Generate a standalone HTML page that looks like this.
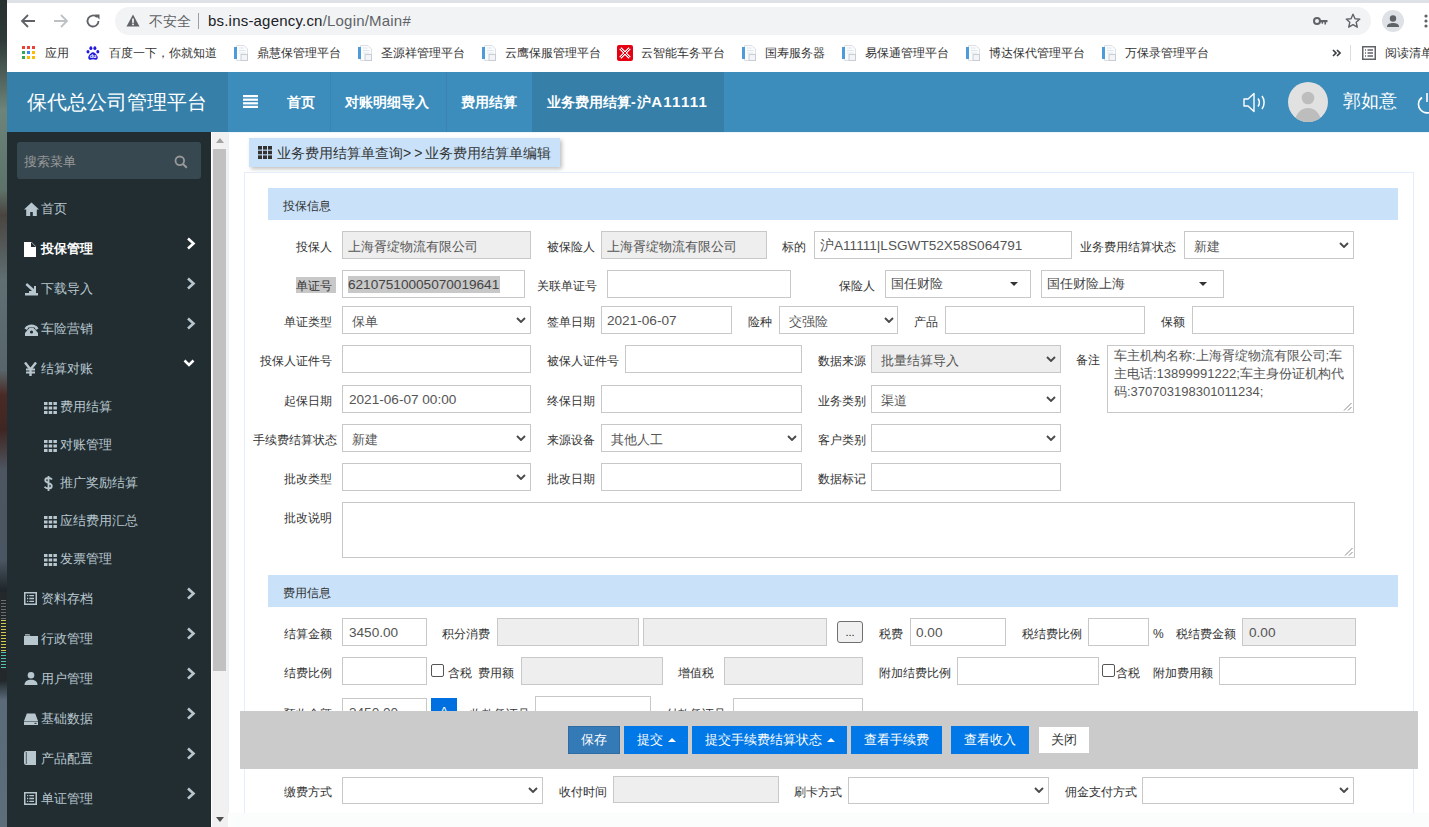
<!DOCTYPE html><html><head><meta charset="utf-8"><title>保代总公司管理平台</title><style>
*{box-sizing:content-box}
html,body{margin:0;padding:0}
body{width:1429px;height:827px;overflow:hidden;position:relative;background:#fff;font-family:"Liberation Sans",sans-serif;color:#333}
.abs{position:absolute}
.lb{position:absolute;font-size:12px;line-height:20px;height:20px;white-space:nowrap;color:#333;margin-top:2px}
.in{position:absolute;border:1px solid #c8c8c8;background:#fff;font-size:13px;color:#555;white-space:nowrap;overflow:hidden;box-sizing:border-box;padding-top:2px}
.dis{background:#eee}
.lt{font-size:13.6px;position:relative;top:-1px}
.cw{position:absolute;line-height:0}
.chev,.tri{display:block}
.sb{position:absolute;left:17px;font-size:13px;color:#b8c7ce;height:20px;line-height:20px;white-space:nowrap;margin-top:1px}
.sb .ic{position:absolute;left:0;top:3px}
.sb .tx{position:absolute;left:24px;top:0}
.sb .ar{position:absolute;left:179px;top:-6px}
.bm{position:absolute;top:44px;font-size:12px;color:#333;line-height:18px;white-space:nowrap}
.nav{position:absolute;top:0;height:60px;line-height:60px;color:#fff;font-size:14px;font-weight:bold;white-space:nowrap}
.btn{position:absolute;top:726px;height:28px;line-height:28px;font-size:13px;color:#fff;background:#0078e7;text-align:center;white-space:nowrap}
</style></head><body>
<div class="abs" style="left:0;top:0;width:7px;height:827px;background:linear-gradient(#26302e 0px,#2f3b38 40px,#6d847a 110px,#5d7268 190px,#4a4440 215px,#5f6f72 280px,#58666c 370px,#4a2a24 395px,#3f2622 430px,#4d5660 470px,#4a5662 560px,#20262a 590px,#20262a 680px,#5a6a78 700px,#5d6d7a 827px)"></div>
<div class="abs" style="left:0;top:592px;width:7px;height:88px;background:#23282b"></div>
<div class="abs" style="left:1px;top:600px;width:5px;height:70px;background:repeating-linear-gradient(#6a6e70 0 1px,#23282b 1px 3px)"></div>
<div class="abs" style="left:1px;top:620px;width:5px;height:32px;background:repeating-linear-gradient(#d0c850 0 1px,#23282b 1px 3px)"></div>
<div class="abs" style="left:1px;top:652px;width:5px;height:18px;background:repeating-linear-gradient(#50c0b0 0 1px,#23282b 1px 3px)"></div>
<div class="abs" style="left:7px;top:0;width:1422px;height:72px;background:#fff"></div>
<div class="abs" style="left:7px;top:0;width:1422px;height:3px;background:#dee1e6"></div>
<svg class="abs" style="left:20px;top:13px" width="16" height="16" viewBox="0 0 16 16"><path d="M15 8H3M8 2L2 8l6 6" fill="none" stroke="#5f6368" stroke-width="1.8"/></svg>
<svg class="abs" style="left:53px;top:13px" width="16" height="16" viewBox="0 0 16 16"><path d="M1 8h12M8 2l6 6-6 6" fill="none" stroke="#bdc1c6" stroke-width="1.8"/></svg>
<svg class="abs" style="left:85px;top:13px" width="16" height="16" viewBox="0 0 16 16"><path d="M13.5 8A5.5 5.5 0 1 1 11.9 4.1" fill="none" stroke="#5f6368" stroke-width="1.8"/><path d="M9.5 1.5h5v5z" fill="#5f6368"/></svg>
<div class="abs" style="left:115px;top:7px;width:1256px;height:28px;border-radius:14px;background:#f1f3f4"></div>
<svg class="abs" style="left:126px;top:14px" width="14" height="13" viewBox="0 0 14 13"><path d="M7 0.5L13.5 12.5H0.5z" fill="#5f6368"/><rect x="6.2" y="4.5" width="1.6" height="4.3" fill="#fff"/><rect x="6.2" y="9.6" width="1.6" height="1.6" fill="#fff"/></svg>
<div class="abs" style="left:149px;top:11px;font-size:14px;line-height:20px;color:#5f6368;white-space:nowrap">不安全</div>
<div class="abs" style="left:198px;top:13px;width:1px;height:16px;background:#9aa0a6"></div>
<div class="abs" style="left:208px;top:11px;font-size:15px;line-height:20px;color:#202124;white-space:nowrap;letter-spacing:0.2px">bs.ins-agency.cn<span style="color:#5f6368">/Login/Main#</span></div>
<svg class="abs" style="left:1313px;top:16px" width="15" height="10" viewBox="0 0 15 10"><circle cx="4" cy="5" r="3" fill="none" stroke="#5f6368" stroke-width="2"/><path d="M7 4h7.5v2.2H13v2.3h-1.6V6.2H10v1.6H8.6V6.2H7z" fill="#5f6368"/></svg>
<svg class="abs" style="left:1345px;top:13px" width="16" height="15" viewBox="0 0 16 15"><path d="M8 1.2l2 4.5 4.8.4-3.6 3.2 1.1 4.8L8 11.6l-4.3 2.5 1.1-4.8L1.2 6.1 6 5.7z" fill="none" stroke="#5f6368" stroke-width="1.4" stroke-linejoin="round"/></svg>
<div class="abs" style="left:1382px;top:10px;width:22px;height:22px;border-radius:50%;background:#dee1e6;overflow:hidden"><svg width="22" height="22" viewBox="0 0 22 22"><circle cx="11" cy="8.5" r="3.2" fill="#5f6368"/><path d="M5 16.5c0-2.5 3-3.6 6-3.6s6 1.1 6 3.6v.5H5z" fill="#5f6368"/></svg></div>
<svg class="abs" style="left:1423px;top:13px" width="6" height="16" viewBox="0 0 6 16"><circle cx="3" cy="3" r="1.6" fill="#5f6368"/><circle cx="3" cy="8" r="1.6" fill="#5f6368"/><circle cx="3" cy="13" r="1.6" fill="#5f6368"/></svg>
<svg class="abs" style="left:22px;top:46px" width="13" height="13" viewBox="0 0 13 13"><rect x="0" y="0" width="3" height="3" fill="#ea4335"/><rect x="5" y="0" width="3" height="3" fill="#ea4335"/><rect x="10" y="0" width="3" height="3" fill="#ea4335"/><rect x="0" y="5" width="3" height="3" fill="#34a853"/><rect x="5" y="5" width="3" height="3" fill="#4285f4"/><rect x="10" y="5" width="3" height="3" fill="#fbbc05"/><rect x="0" y="10" width="3" height="3" fill="#34a853"/><rect x="5" y="10" width="3" height="3" fill="#fbbc05"/><rect x="10" y="10" width="3" height="3" fill="#fbbc05"/></svg>
<div class="bm" style="left:45px">应用</div>
<svg class="abs" style="left:86px;top:46px" width="14" height="14" viewBox="0 0 14 14"><ellipse cx="2" cy="5.7" rx="1.5" ry="1.8" fill="#2319dc"/><ellipse cx="4.9" cy="2.2" rx="1.5" ry="1.9" fill="#2319dc"/><ellipse cx="8.9" cy="2.2" rx="1.5" ry="1.9" fill="#2319dc"/><ellipse cx="11.8" cy="5.7" rx="1.5" ry="1.8" fill="#2319dc"/><path d="M7 6.3c-1.6 0-3.2 2-4.3 3.6-.9 1.4-.5 3.8 1.8 3.8 1 0 1.6-.4 2.5-.4s1.5.4 2.5.4c2.3 0 2.7-2.4 1.8-3.8C10.2 8.3 8.6 6.3 7 6.3z" fill="#2319dc"/><text x="7" y="12" font-size="5.5" font-weight="bold" fill="#fff" text-anchor="middle" font-family="Liberation Sans">du</text></svg>
<div class="bm" style="left:109px">百度一下，你就知道</div>
<svg class="abs" style="left:233px;top:45px" width="16" height="16" viewBox="0 0 16 16"><path d="M3.5 0.5h7.5l3.5 3.5v11.5h-11z" fill="#fbfcfd" stroke="#dcdfe4"/><rect x="1" y="2" width="3" height="12" fill="#4d9bd8"/><path d="M6 3h4.5M6 5.5h6.5M6 8h6.5" stroke="#dfe4ea"/><rect x="8" y="9.5" width="6.5" height="6" fill="#f2f4f7" stroke="#c9cdd3"/></svg>
<div class="bm" style="left:257px">鼎慧保管理平台</div>
<svg class="abs" style="left:357px;top:45px" width="16" height="16" viewBox="0 0 16 16"><path d="M3.5 0.5h7.5l3.5 3.5v11.5h-11z" fill="#fbfcfd" stroke="#dcdfe4"/><rect x="1" y="2" width="3" height="12" fill="#4d9bd8"/><path d="M6 3h4.5M6 5.5h6.5M6 8h6.5" stroke="#dfe4ea"/><rect x="8" y="9.5" width="6.5" height="6" fill="#f2f4f7" stroke="#c9cdd3"/></svg>
<div class="bm" style="left:381px">圣源祥管理平台</div>
<svg class="abs" style="left:481px;top:45px" width="16" height="16" viewBox="0 0 16 16"><path d="M3.5 0.5h7.5l3.5 3.5v11.5h-11z" fill="#fbfcfd" stroke="#dcdfe4"/><rect x="1" y="2" width="3" height="12" fill="#4d9bd8"/><path d="M6 3h4.5M6 5.5h6.5M6 8h6.5" stroke="#dfe4ea"/><rect x="8" y="9.5" width="6.5" height="6" fill="#f2f4f7" stroke="#c9cdd3"/></svg>
<div class="bm" style="left:505px">云鹰保服管理平台</div>
<svg class="abs" style="left:741px;top:45px" width="16" height="16" viewBox="0 0 16 16"><path d="M3.5 0.5h7.5l3.5 3.5v11.5h-11z" fill="#fbfcfd" stroke="#dcdfe4"/><rect x="1" y="2" width="3" height="12" fill="#4d9bd8"/><path d="M6 3h4.5M6 5.5h6.5M6 8h6.5" stroke="#dfe4ea"/><rect x="8" y="9.5" width="6.5" height="6" fill="#f2f4f7" stroke="#c9cdd3"/></svg>
<div class="bm" style="left:765px">国寿服务器</div>
<svg class="abs" style="left:841px;top:45px" width="16" height="16" viewBox="0 0 16 16"><path d="M3.5 0.5h7.5l3.5 3.5v11.5h-11z" fill="#fbfcfd" stroke="#dcdfe4"/><rect x="1" y="2" width="3" height="12" fill="#4d9bd8"/><path d="M6 3h4.5M6 5.5h6.5M6 8h6.5" stroke="#dfe4ea"/><rect x="8" y="9.5" width="6.5" height="6" fill="#f2f4f7" stroke="#c9cdd3"/></svg>
<div class="bm" style="left:865px">易保通管理平台</div>
<svg class="abs" style="left:965px;top:45px" width="16" height="16" viewBox="0 0 16 16"><path d="M3.5 0.5h7.5l3.5 3.5v11.5h-11z" fill="#fbfcfd" stroke="#dcdfe4"/><rect x="1" y="2" width="3" height="12" fill="#4d9bd8"/><path d="M6 3h4.5M6 5.5h6.5M6 8h6.5" stroke="#dfe4ea"/><rect x="8" y="9.5" width="6.5" height="6" fill="#f2f4f7" stroke="#c9cdd3"/></svg>
<div class="bm" style="left:989px">博达保代管理平台</div>
<svg class="abs" style="left:1101px;top:45px" width="16" height="16" viewBox="0 0 16 16"><path d="M3.5 0.5h7.5l3.5 3.5v11.5h-11z" fill="#fbfcfd" stroke="#dcdfe4"/><rect x="1" y="2" width="3" height="12" fill="#4d9bd8"/><path d="M6 3h4.5M6 5.5h6.5M6 8h6.5" stroke="#dfe4ea"/><rect x="8" y="9.5" width="6.5" height="6" fill="#f2f4f7" stroke="#c9cdd3"/></svg>
<div class="bm" style="left:1125px">万保录管理平台</div>
<svg class="abs" style="left:617px;top:45px" width="16" height="16" viewBox="0 0 16 16"><rect width="16" height="16" rx="2" fill="#e50012"/><path d="M3.3 3.3l9.4 9.4M12.7 3.3l-9.4 9.4" stroke="#fff" stroke-width="3"/><path d="M3.3 3.3l9.4 9.4M12.7 3.3l-9.4 9.4" stroke="#e50012" stroke-width="1"/><circle cx="8" cy="8" r="1" fill="#e50012"/></svg>
<div class="bm" style="left:641px">云智能车务平台</div>
<svg class="abs" style="left:1332px;top:49px" width="9" height="8" viewBox="0 0 9 8"><path d="M1 1l3 3-3 3M5 1l3 3-3 3" fill="none" stroke="#3c4043" stroke-width="1.7"/></svg>
<div class="abs" style="left:1350px;top:45px;width:1px;height:16px;background:#dadce0"></div>
<svg class="abs" style="left:1362px;top:46px" width="14" height="14" viewBox="0 0 14 14"><rect x="0.75" y="0.75" width="12.5" height="12.5" fill="none" stroke="#5f6368" stroke-width="1.5"/><path d="M3 4h1M5.5 4h5.5M3 7h1M5.5 7h5.5M3 10h1M5.5 10h5.5" stroke="#5f6368" stroke-width="1.3"/></svg>
<div class="bm" style="left:1385px">阅读清单</div>
<div class="abs" style="left:7px;top:72px;width:1422px;height:60px;background:#3c8dbc"></div>
<div class="abs" style="left:7px;top:72px;width:221px;height:60px;background:#367fa9"></div>
<div class="abs" style="left:27px;top:88px;font-size:20px;line-height:28px;color:#fff;white-space:nowrap">保代总公司管理平台</div>
<svg class="abs" style="left:243px;top:95px" width="15" height="13" viewBox="0 0 15 13"><rect y="0" width="15" height="2.2" fill="#fff"/><rect y="3.6" width="15" height="2.2" fill="#fff"/><rect y="7.2" width="15" height="2.2" fill="#fff"/><rect y="10.8" width="15" height="2.2" fill="#fff"/></svg>
<div class="abs" style="left:330px;top:72px;width:1px;height:60px;background:#3a84b0"></div>
<div class="abs" style="left:446px;top:72px;width:1px;height:60px;background:#3a84b0"></div>
<div class="abs" style="left:532px;top:72px;width:192px;height:60px;background:#367fa9"></div>
<div class="abs" style="left:0;top:72px;width:1429px;height:60px"><div class="nav" style="left:287px">首页</div><div class="nav" style="left:345px">对账明细导入</div><div class="nav" style="left:461px">费用结算</div><div class="nav" style="left:547px">业务费用结算<span style="letter-spacing:1.5px">-</span>沪<span style="font-size:15px;letter-spacing:1.3px">A11111</span></div></div>
<svg class="abs" style="left:1243px;top:92px" width="24" height="21" viewBox="0 0 24 21"><path d="M1 7h4l6-5.5v18L5 14H1z" fill="none" stroke="#fff" stroke-width="1.4" stroke-linejoin="round"/><path d="M15 6.5c1.6 2.3 1.6 5.7 0 8M19 4c2.8 3.6 2.8 9.4 0 13" fill="none" stroke="#fff" stroke-width="1.5"/></svg>
<div class="abs" style="left:1288px;top:82px;width:40px;height:40px;border-radius:50%;background:#e1e1e1;overflow:hidden"><svg width="40" height="40" viewBox="0 0 40 40"><circle cx="20" cy="16" r="6.3" fill="#bdbdbd"/><ellipse cx="20" cy="38.5" rx="12.5" ry="12.5" fill="#bdbdbd"/></svg></div>
<div class="abs" style="left:1343px;top:89px;font-size:18px;line-height:24px;color:#fff;white-space:nowrap">郭如意</div>
<svg class="abs" style="left:1416px;top:91px" width="22" height="24" viewBox="0 0 22 24"><path d="M6 6.5A8.5 8.5 0 1 0 16 6.5" fill="none" stroke="#fff" stroke-width="1.6"/><path d="M11 2v9" stroke="#fff" stroke-width="1.6"/></svg>
<div class="abs" style="left:7px;top:132px;width:204px;height:695px;background:#222d32"></div>
<div class="abs" style="left:17px;top:142px;width:184px;height:37px;border-radius:3px;background:#374850"></div>
<div class="abs" style="left:24px;top:152px;font-size:13px;line-height:20px;color:#999;white-space:nowrap">搜索菜单</div>
<svg class="abs" style="left:174px;top:155px" width="14" height="14" viewBox="0 0 14 14"><circle cx="5.8" cy="5.8" r="4.3" fill="none" stroke="#999" stroke-width="1.8"/><path d="M9 9l3.8 3.8" stroke="#999" stroke-width="2"/></svg>
<div class="sb" style="top:198px;left:17px;"><span class="ic" style="top:3px;left:7px"><svg width="15" height="14" viewBox="0 0 15 14"><path d="M7.5 0.5L0 7.5h2.2V14h4V10h2.6v4h4V7.5H15z" fill="#b8c7ce"/></svg></span><span class="tx">首页</span></div>
<div class="sb" style="top:238px;left:17px;color:#fff;font-weight:bold"><span class="ic" style="top:3px;left:7px"><svg width="12" height="15" viewBox="0 0 12 15"><path d="M0 0h7.5l4.5 4.5V15H0z" fill="#fff"/><path d="M7 0v5h5" fill="#222d32"/></svg></span><span class="tx">投保管理</span><span class="ar" style="left:169px;top:-3px"><svg width="11" height="13" viewBox="0 0 11 13"><path d="M2 1.5l5.5 5-5.5 5" fill="none" stroke="#fff" stroke-width="2.6"/></svg></span></div>
<div class="sb" style="top:278px;left:17px;"><span class="ic" style="top:3px;left:7px"><svg width="15" height="14" viewBox="0 0 15 14"><path d="M1 11h13v2.5H1z" fill="#b8c7ce"/><path d="M3 1l7 6V4h2v7H5V9h3L1.5 3z" fill="#b8c7ce"/></svg></span><span class="tx">下载导入</span><span class="ar" style="left:169px;top:-3px"><svg width="11" height="13" viewBox="0 0 11 13"><path d="M2 1.5l5.5 5-5.5 5" fill="none" stroke="#b8c7ce" stroke-width="2.6"/></svg></span></div>
<div class="sb" style="top:318px;left:17px;"><span class="ic" style="top:3px;left:7px"><svg width="15" height="12" viewBox="0 0 15 12"><path d="M0.5 4.5C2 1.5 5 0.5 7.5 0.5s5.5 1 7 4L12 6 10.5 3.5h-6L3 6z" fill="#b8c7ce"/><path d="M3.5 6l2-2h4l2 2 2.5 3v3H1V9z" fill="#b8c7ce"/><circle cx="7.5" cy="8" r="1.6" fill="#222d32"/></svg></span><span class="tx">车险营销</span><span class="ar" style="left:169px;top:-3px"><svg width="11" height="13" viewBox="0 0 11 13"><path d="M2 1.5l5.5 5-5.5 5" fill="none" stroke="#b8c7ce" stroke-width="2.6"/></svg></span></div>
<div class="sb" style="top:358px;left:17px;"><span class="ic" style="top:3px;left:7px"><svg width="13" height="14" viewBox="0 0 13 14"><path d="M1 0.5l5.5 7M12 0.5L6.5 7.5V14" fill="none" stroke="#b8c7ce" stroke-width="2.4"/><path d="M2 7.5h9M2 10.5h9" stroke="#b8c7ce" stroke-width="1.8"/></svg></span><span class="tx">结算对账</span><span class="ar" style="left:166px;top:-5px"><svg width="12" height="10" viewBox="0 0 12 10"><path d="M1.5 2.5l4.5 4.5 4.5-4.5" fill="none" stroke="#fff" stroke-width="2.6"/></svg></span></div>
<div class="sb" style="top:396px;left:37px"><span class="ic" style="top:3px;left:7px"><svg width="13" height="12" viewBox="0 0 13 12"><g fill="#b8c7ce"><rect x="0" y="0" width="3.5" height="3"/><rect x="4.7" y="0" width="3.5" height="3"/><rect x="9.4" y="0" width="3.5" height="3"/><rect x="0" y="4.5" width="3.5" height="3"/><rect x="4.7" y="4.5" width="3.5" height="3"/><rect x="9.4" y="4.5" width="3.5" height="3"/><rect x="0" y="9" width="3.5" height="3"/><rect x="4.7" y="9" width="3.5" height="3"/><rect x="9.4" y="9" width="3.5" height="3"/></g></svg></span><span class="tx" style="left:23px">费用结算</span></div>
<div class="sb" style="top:434px;left:37px"><span class="ic" style="top:3px;left:7px"><svg width="13" height="12" viewBox="0 0 13 12"><g fill="#b8c7ce"><rect x="0" y="0" width="3.5" height="3"/><rect x="4.7" y="0" width="3.5" height="3"/><rect x="9.4" y="0" width="3.5" height="3"/><rect x="0" y="4.5" width="3.5" height="3"/><rect x="4.7" y="4.5" width="3.5" height="3"/><rect x="9.4" y="4.5" width="3.5" height="3"/><rect x="0" y="9" width="3.5" height="3"/><rect x="4.7" y="9" width="3.5" height="3"/><rect x="9.4" y="9" width="3.5" height="3"/></g></svg></span><span class="tx" style="left:23px">对账管理</span></div>
<div class="sb" style="top:472px;left:37px"><span class="ic" style="top:3px;left:7px"><svg width="9" height="15" viewBox="0 0 9 15"><path d="M8 3.5C7.3 2.5 6 2 4.5 2 2.5 2 1.2 3 1.2 4.3c0 3 6.6 2.2 6.6 5.6 0 1.5-1.5 2.6-3.5 2.6-1.6 0-3-.6-3.8-1.7M4.5 0v15" fill="none" stroke="#b8c7ce" stroke-width="1.8"/></svg></span><span class="tx" style="left:23px">推广奖励结算</span></div>
<div class="sb" style="top:510px;left:37px"><span class="ic" style="top:3px;left:7px"><svg width="13" height="12" viewBox="0 0 13 12"><g fill="#b8c7ce"><rect x="0" y="0" width="3.5" height="3"/><rect x="4.7" y="0" width="3.5" height="3"/><rect x="9.4" y="0" width="3.5" height="3"/><rect x="0" y="4.5" width="3.5" height="3"/><rect x="4.7" y="4.5" width="3.5" height="3"/><rect x="9.4" y="4.5" width="3.5" height="3"/><rect x="0" y="9" width="3.5" height="3"/><rect x="4.7" y="9" width="3.5" height="3"/><rect x="9.4" y="9" width="3.5" height="3"/></g></svg></span><span class="tx" style="left:23px">应结费用汇总</span></div>
<div class="sb" style="top:548px;left:37px"><span class="ic" style="top:3px;left:7px"><svg width="13" height="12" viewBox="0 0 13 12"><g fill="#b8c7ce"><rect x="0" y="0" width="3.5" height="3"/><rect x="4.7" y="0" width="3.5" height="3"/><rect x="9.4" y="0" width="3.5" height="3"/><rect x="0" y="4.5" width="3.5" height="3"/><rect x="4.7" y="4.5" width="3.5" height="3"/><rect x="9.4" y="4.5" width="3.5" height="3"/><rect x="0" y="9" width="3.5" height="3"/><rect x="4.7" y="9" width="3.5" height="3"/><rect x="9.4" y="9" width="3.5" height="3"/></g></svg></span><span class="tx" style="left:23px">发票管理</span></div>
<div class="sb" style="top:588px;left:17px;"><span class="ic" style="top:2px;left:7px"><svg width="13" height="13" viewBox="0 0 13 13"><rect x="0.75" y="0.75" width="11.5" height="11.5" fill="none" stroke="#b8c7ce" stroke-width="1.5"/><path d="M3 3.7h1.2M5.3 3.7h4.7M3 6.5h1.2M5.3 6.5h4.7M3 9.3h1.2M5.3 9.3h4.7" stroke="#b8c7ce" stroke-width="1.3"/></svg></span><span class="tx">资料存档</span><span class="ar" style="left:169px;top:-3px"><svg width="11" height="13" viewBox="0 0 11 13"><path d="M2 1.5l5.5 5-5.5 5" fill="none" stroke="#b8c7ce" stroke-width="2.6"/></svg></span></div>
<div class="sb" style="top:628px;left:17px;"><span class="ic" style="top:2px;left:7px"><svg width="14" height="12" viewBox="0 0 14 12"><path d="M0 3h14v9H0z" fill="#b8c7ce"/><path d="M1 1.2h4.5l1 1.3H1z" fill="#b8c7ce"/></svg></span><span class="tx">行政管理</span><span class="ar" style="left:169px;top:-3px"><svg width="11" height="13" viewBox="0 0 11 13"><path d="M2 1.5l5.5 5-5.5 5" fill="none" stroke="#b8c7ce" stroke-width="2.6"/></svg></span></div>
<div class="sb" style="top:668px;left:17px;"><span class="ic" style="top:2px;left:7px"><svg width="14" height="14" viewBox="0 0 14 14"><circle cx="7" cy="4.2" r="3.3" fill="#b8c7ce"/><path d="M0.5 14c0-3.3 2.8-5.2 6.5-5.2s6.5 1.9 6.5 5.2z" fill="#b8c7ce"/></svg></span><span class="tx">用户管理</span><span class="ar" style="left:169px;top:-3px"><svg width="11" height="13" viewBox="0 0 11 13"><path d="M2 1.5l5.5 5-5.5 5" fill="none" stroke="#b8c7ce" stroke-width="2.6"/></svg></span></div>
<div class="sb" style="top:708px;left:17px;"><span class="ic" style="top:2px;left:7px"><svg width="14" height="12" viewBox="0 0 14 12"><path d="M2.8 0.5h8.4l2.8 7.5H0z" fill="#b8c7ce"/><rect x="0" y="8.5" width="14" height="3.5" fill="#b8c7ce"/><rect x="10.5" y="9.8" width="2" height="1" fill="#222d32"/></svg></span><span class="tx">基础数据</span><span class="ar" style="left:169px;top:-3px"><svg width="11" height="13" viewBox="0 0 11 13"><path d="M2 1.5l5.5 5-5.5 5" fill="none" stroke="#b8c7ce" stroke-width="2.6"/></svg></span></div>
<div class="sb" style="top:748px;left:17px;"><span class="ic" style="top:2px;left:7px"><svg width="12" height="14" viewBox="0 0 12 14"><path d="M2 0h10v14H2c-1 0-2-.8-2-2V2c0-1.2 1-2 2-2z" fill="#b8c7ce"/><path d="M2.3 1v12" stroke="#222d32" stroke-width="0.7"/></svg></span><span class="tx">产品配置</span><span class="ar" style="left:169px;top:-3px"><svg width="11" height="13" viewBox="0 0 11 13"><path d="M2 1.5l5.5 5-5.5 5" fill="none" stroke="#b8c7ce" stroke-width="2.6"/></svg></span></div>
<div class="sb" style="top:788px;left:17px;"><span class="ic" style="top:2px;left:7px"><svg width="13" height="13" viewBox="0 0 13 13"><rect x="0.75" y="0.75" width="11.5" height="11.5" fill="none" stroke="#b8c7ce" stroke-width="1.5"/><path d="M3 3.7h1.2M5.3 3.7h4.7M3 6.5h1.2M5.3 6.5h4.7M3 9.3h1.2M5.3 9.3h4.7" stroke="#b8c7ce" stroke-width="1.3"/></svg></span><span class="tx">单证管理</span><span class="ar" style="left:169px;top:-3px"><svg width="11" height="13" viewBox="0 0 11 13"><path d="M2 1.5l5.5 5-5.5 5" fill="none" stroke="#b8c7ce" stroke-width="2.6"/></svg></span></div>
<div class="abs" style="left:211px;top:132px;width:1px;height:695px;background:#fff"></div>
<div class="abs" style="left:212px;top:132px;width:16px;height:695px;background:#f1f1f1"></div>
<div class="abs" style="left:213px;top:149px;width:13px;height:522px;background:#c1c1c1"></div>
<svg class="abs" style="left:216px;top:138px" width="8" height="5" viewBox="0 0 8 5"><path d="M0 5h8L4 0z" fill="#a3a3a3"/></svg>
<svg class="abs" style="left:216px;top:817px" width="8" height="5" viewBox="0 0 8 5"><path d="M0 0h8L4 5z" fill="#505050"/></svg>
<div class="abs" style="left:228px;top:132px;width:1201px;height:695px;background:#fff"></div>
<div class="abs" style="left:228px;top:813px;width:1201px;height:14px;background:#fbfcfc"></div>
<div class="abs" style="left:228px;top:132px;width:1px;height:681px;background:#e8f1fb"></div>
<div class="abs" style="left:228px;top:132px;width:1201px;height:1px;background:#eef4fc"></div>
<div class="abs" style="left:249px;top:138px;width:311px;height:29px;background:#c9e2f9;box-shadow:2px 2px 4px rgba(0,0,0,0.25)"></div>
<svg class="abs" style="left:258px;top:146px" width="14" height="13" viewBox="0 0 14 13"><g fill="#333"><rect x="0" y="0" width="4" height="3.6"/><rect x="5" y="0" width="4" height="3.6"/><rect x="10" y="0" width="4" height="3.6"/><rect x="0" y="4.7" width="4" height="3.6"/><rect x="5" y="4.7" width="4" height="3.6"/><rect x="10" y="4.7" width="4" height="3.6"/><rect x="0" y="9.4" width="4" height="3.6"/><rect x="5" y="9.4" width="4" height="3.6"/><rect x="10" y="9.4" width="4" height="3.6"/></g></svg>
<div class="abs" style="left:277px;top:143px;font-size:14px;line-height:20px;color:#333;white-space:nowrap">业务费用结算单查询<span style="letter-spacing:3px">&gt;&gt;</span>业务费用结算单编辑</div>
<div class="abs" style="left:244px;top:172px;width:1168px;height:640px;border:1px solid #e3eefa;border-bottom:none"></div>
<div class="abs" style="left:268px;top:188px;width:1130px;height:32px;background:#c9e2f9"></div>
<div class="lb" style="left:283px;top:194px">投保信息</div>
<div class="abs" style="left:268px;top:575px;width:1130px;height:32px;background:#c9e2f9"></div>
<div class="lb" style="left:283px;top:581px">费用信息</div>
<div class="lb " style="left:296px;top:235px">投保人</div>
<div class="in dis" style="left:342px;top:231px;width:189px;height:28px;line-height:26px;padding-left:5px">上海胥绽物流有限公司</div>
<div class="lb " style="left:547px;top:235px">被保险人</div>
<div class="in dis" style="left:601px;top:231px;width:166px;height:28px;line-height:26px;padding-left:5px">上海胥绽物流有限公司</div>
<div class="lb " style="left:782px;top:235px">标的</div>
<div class="in" style="left:814px;top:231px;width:258px;height:28px;line-height:26px;padding-left:5px"><span class="lt">沪A11111|LSGWT52X58S064791</span></div>
<div class="lb " style="left:1080px;top:235px">业务费用结算状态</div>
<div class="in sel" style="left:1184px;top:231px;width:170px;height:28px;line-height:26px;padding-left:9px">新建<span class="cw" style="left:154px;top:10px"><svg class="chev" width="10" height="6" viewBox="0 0 10 6"><polyline points="1,1 5,5 9,1" fill="none" stroke="#4a4a4a" stroke-width="1.9"/></svg></span></div>
<div class="abs" style="left:296px;top:277px;width:40px;height:16px;background:#c8c8c8"></div>
<div class="lb " style="left:296px;top:274px">单证号</div>
<div class="in" style="left:342px;top:270px;width:183px;height:28px;line-height:26px;padding-left:5px"><span style="background:#c8c8c8;color:#444;display:inline-block;line-height:17px;padding-right:1px;font-size:13.6px;vertical-align:top;margin-top:3px">62107510005070019641</span></div>
<div class="lb " style="left:537px;top:274px">关联单证号</div>
<div class="in" style="left:607px;top:270px;width:184px;height:28px;line-height:26px;padding-left:5px"></div>
<div class="lb " style="left:839px;top:274px">保险人</div>
<div class="in" style="left:885px;top:270px;width:146px;height:28px;line-height:26px;padding-left:5px;padding-top:0;color:#444">国任财险<span class="cw" style="left:124px;top:11px"><svg class="tri" width="8" height="4" viewBox="0 0 8 4"><polygon points="0,0 8,0 4,4" fill="#333"/></svg></span></div>
<div class="in" style="left:1041px;top:270px;width:183px;height:28px;line-height:26px;padding-left:5px;padding-top:0;color:#444">国任财险上海<span class="cw" style="left:157px;top:11px"><svg class="tri" width="8" height="4" viewBox="0 0 8 4"><polygon points="0,0 8,0 4,4" fill="#333"/></svg></span></div>
<div class="lb " style="left:284px;top:310px">单证类型</div>
<div class="in sel" style="left:342px;top:306px;width:189px;height:28px;line-height:26px;padding-left:9px">保单<span class="cw" style="left:173px;top:10px"><svg class="chev" width="10" height="6" viewBox="0 0 10 6"><polyline points="1,1 5,5 9,1" fill="none" stroke="#4a4a4a" stroke-width="1.9"/></svg></span></div>
<div class="lb " style="left:547px;top:310px">签单日期</div>
<div class="in" style="left:601px;top:306px;width:131px;height:28px;line-height:26px;padding-left:5px"><span class="lt">2021-06-07</span></div>
<div class="lb " style="left:748px;top:310px">险种</div>
<div class="in sel" style="left:779px;top:306px;width:119px;height:28px;line-height:26px;padding-left:9px">交强险<span class="cw" style="left:104px;top:10px"><svg class="chev" width="10" height="6" viewBox="0 0 10 6"><polyline points="1,1 5,5 9,1" fill="none" stroke="#4a4a4a" stroke-width="1.9"/></svg></span></div>
<div class="lb " style="left:914px;top:310px">产品</div>
<div class="in" style="left:945px;top:306px;width:200px;height:28px;line-height:26px;padding-left:5px"></div>
<div class="lb " style="left:1161px;top:310px">保额</div>
<div class="in" style="left:1192px;top:306px;width:162px;height:28px;line-height:26px;padding-left:5px"></div>
<div class="lb " style="left:260px;top:349px">投保人证件号</div>
<div class="in" style="left:342px;top:345px;width:189px;height:28px;line-height:26px;padding-left:5px"></div>
<div class="lb " style="left:547px;top:349px">被保人证件号</div>
<div class="in" style="left:625px;top:345px;width:177px;height:28px;line-height:26px;padding-left:5px"></div>
<div class="lb " style="left:818px;top:349px">数据来源</div>
<div class="in sel dis" style="left:871px;top:345px;width:190px;height:28px;line-height:26px;padding-left:9px">批量结算导入<span class="cw" style="left:174px;top:10px"><svg class="chev" width="10" height="6" viewBox="0 0 10 6"><polyline points="1,1 5,5 9,1" fill="none" stroke="#4a4a4a" stroke-width="1.9"/></svg></span></div>
<div class="lb " style="left:1076px;top:348px">备注</div>
<div class="in" style="left:1107px;top:345px;width:247px;height:68px;padding:1px 0 0 6px;font-size:13px;line-height:18px;white-space:normal;color:#555">车主机构名称:上海胥绽物流有限公司;车主电话:13899991222;车主身份证机构代码:370703198301011234;<svg style="position:absolute;right:1px;bottom:1px" width="9" height="9" viewBox="0 0 9 9"><path d="M8.5 1L1 8.5M8.5 5L5 8.5" stroke="#888" stroke-width="1"/></svg></div>
<div class="lb " style="left:284px;top:389px">起保日期</div>
<div class="in" style="left:342px;top:385px;width:189px;height:28px;line-height:26px;padding-left:6px"><span class="lt">2021-06-07 00:00</span></div>
<div class="lb " style="left:547px;top:389px">终保日期</div>
<div class="in" style="left:601px;top:385px;width:201px;height:28px;line-height:26px;padding-left:5px"></div>
<div class="lb " style="left:818px;top:389px">业务类别</div>
<div class="in sel" style="left:871px;top:385px;width:190px;height:28px;line-height:26px;padding-left:9px">渠道<span class="cw" style="left:174px;top:10px"><svg class="chev" width="10" height="6" viewBox="0 0 10 6"><polyline points="1,1 5,5 9,1" fill="none" stroke="#4a4a4a" stroke-width="1.9"/></svg></span></div>
<div class="lb " style="left:253px;top:428px">手续费结算状态</div>
<div class="in sel" style="left:342px;top:424px;width:189px;height:28px;line-height:26px;padding-left:9px">新建<span class="cw" style="left:173px;top:10px"><svg class="chev" width="10" height="6" viewBox="0 0 10 6"><polyline points="1,1 5,5 9,1" fill="none" stroke="#4a4a4a" stroke-width="1.9"/></svg></span></div>
<div class="lb " style="left:547px;top:428px">来源设备</div>
<div class="in sel" style="left:601px;top:424px;width:201px;height:28px;line-height:26px;padding-left:9px">其他人工<span class="cw" style="left:185px;top:10px"><svg class="chev" width="10" height="6" viewBox="0 0 10 6"><polyline points="1,1 5,5 9,1" fill="none" stroke="#4a4a4a" stroke-width="1.9"/></svg></span></div>
<div class="lb " style="left:818px;top:428px">客户类别</div>
<div class="in sel" style="left:871px;top:424px;width:190px;height:28px;line-height:26px;padding-left:9px"><span class="cw" style="left:174px;top:10px"><svg class="chev" width="10" height="6" viewBox="0 0 10 6"><polyline points="1,1 5,5 9,1" fill="none" stroke="#4a4a4a" stroke-width="1.9"/></svg></span></div>
<div class="lb " style="left:284px;top:467px">批改类型</div>
<div class="in sel" style="left:342px;top:463px;width:189px;height:28px;line-height:26px;padding-left:9px"><span class="cw" style="left:173px;top:10px"><svg class="chev" width="10" height="6" viewBox="0 0 10 6"><polyline points="1,1 5,5 9,1" fill="none" stroke="#4a4a4a" stroke-width="1.9"/></svg></span></div>
<div class="lb " style="left:547px;top:467px">批改日期</div>
<div class="in" style="left:601px;top:463px;width:201px;height:28px;line-height:26px;padding-left:5px"></div>
<div class="lb " style="left:818px;top:467px">数据标记</div>
<div class="in" style="left:871px;top:463px;width:190px;height:28px;line-height:26px;padding-left:5px"></div>
<div class="lb " style="left:284px;top:506px">批改说明</div>
<div class="in" style="left:342px;top:502px;width:1013px;height:56px"><svg style="position:absolute;right:1px;bottom:1px" width="9" height="9" viewBox="0 0 9 9"><path d="M8.5 1L1 8.5M8.5 5L5 8.5" stroke="#888" stroke-width="1"/></svg></div>
<div class="lb " style="left:284px;top:622px">结算金额</div>
<div class="in" style="left:342px;top:618px;width:85px;height:28px;line-height:26px;padding-left:6px"><span class="lt">3450.00</span></div>
<div class="lb " style="left:442px;top:622px">积分消费</div>
<div class="in dis" style="left:497px;top:618px;width:142px;height:28px;line-height:26px;padding-left:5px"></div>
<div class="in dis" style="left:643px;top:618px;width:184px;height:28px;line-height:26px;padding-left:5px"></div>
<div class="abs" style="left:837px;top:621px;width:24px;height:20px;border:1px solid #707070;border-radius:3px;background:#f0f0f0;font-size:11px;line-height:20px;text-align:center;color:#222">...</div>
<div class="lb " style="left:879px;top:622px">税费</div>
<div class="in" style="left:910px;top:618px;width:96px;height:28px;line-height:26px;padding-left:5px"><span class="lt">0.00</span></div>
<div class="lb " style="left:1022px;top:622px">税结费比例</div>
<div class="in" style="left:1088px;top:618px;width:61px;height:28px;line-height:26px;padding-left:5px"></div>
<div class="lb " style="left:1153px;top:622px">%</div>
<div class="lb " style="left:1176px;top:622px">税结费金额</div>
<div class="in dis" style="left:1242px;top:618px;width:114px;height:28px;line-height:26px;padding-left:6px"><span class="lt">0.00</span></div>
<div class="lb " style="left:284px;top:661px">结费比例</div>
<div class="in" style="left:342px;top:657px;width:85px;height:28px;line-height:26px;padding-left:5px"></div>
<div class="abs" style="left:431px;top:664px;width:11px;height:11px;border:1px solid #555;border-radius:2px;background:#fff"></div>
<div class="lb " style="left:448px;top:661px">含税</div>
<div class="lb " style="left:478px;top:661px">费用额</div>
<div class="in dis" style="left:521px;top:657px;width:142px;height:28px;line-height:26px;padding-left:5px"></div>
<div class="lb " style="left:678px;top:661px">增值税</div>
<div class="in dis" style="left:724px;top:657px;width:139px;height:28px;line-height:26px;padding-left:5px"></div>
<div class="lb " style="left:879px;top:661px">附加结费比例</div>
<div class="in" style="left:957px;top:657px;width:142px;height:28px;line-height:26px;padding-left:5px"></div>
<div class="abs" style="left:1102px;top:664px;width:11px;height:11px;border:1px solid #555;border-radius:2px;background:#fff"></div>
<div class="lb " style="left:1116px;top:661px">含税</div>
<div class="lb " style="left:1153px;top:661px">附加费用额</div>
<div class="in" style="left:1219px;top:657px;width:137px;height:28px;line-height:26px;padding-left:5px"></div>
<div class="lb " style="left:284px;top:702px">预收金额</div>
<div class="in" style="left:342px;top:698px;width:85px;height:28px;line-height:26px;padding-left:6px"><span class="lt">3450.00</span></div>
<div class="abs" style="left:431px;top:698px;width:26px;height:28px;background:#0070e0;color:#fff;font-size:13px;line-height:28px;text-align:center">A</div>
<div class="lb " style="left:470px;top:702px">收款凭证号</div>
<div class="in" style="left:535px;top:696px;width:116px;height:28px;line-height:26px;padding-left:5px"></div>
<div class="lb " style="left:666px;top:702px">付款凭证号</div>
<div class="in" style="left:733px;top:698px;width:130px;height:28px;line-height:26px;padding-left:5px"></div>
<div class="abs" style="left:240px;top:711px;width:1178px;height:58px;background:#cbcbcb"></div>
<div class="btn" style="left:568px;width:50px;height:26px;line-height:26px;border:1px solid #2e6da4;background:#337ab7">保存</div>
<div class="btn" style="left:624px;width:64px">提交<svg width="8" height="4" viewBox="0 0 8 4" style="margin-left:5px;vertical-align:2px"><path d="M0 4h8L4 0z" fill="#fff"/></svg></div>
<div class="btn" style="left:692px;width:155px">提交手续费结算状态<svg width="8" height="4" viewBox="0 0 8 4" style="margin-left:5px;vertical-align:2px"><path d="M0 4h8L4 0z" fill="#fff"/></svg></div>
<div class="btn" style="left:851px;width:91px">查看手续费</div>
<div class="btn" style="left:951px;width:78px">查看收入</div>
<div class="btn" style="left:1039px;top:727px;width:50px;height:26px;line-height:26px;background:#fff;color:#333">关闭</div>
<div class="lb " style="left:284px;top:780px">缴费方式</div>
<div class="in sel" style="left:342px;top:777px;width:201px;height:27px;line-height:25px;padding-left:9px"><span class="cw" style="left:185px;top:9px"><svg class="chev" width="10" height="6" viewBox="0 0 10 6"><polyline points="1,1 5,5 9,1" fill="none" stroke="#4a4a4a" stroke-width="1.9"/></svg></span></div>
<div class="lb " style="left:559px;top:780px">收付时间</div>
<div class="in dis" style="left:613px;top:776px;width:166px;height:27px;line-height:25px;padding-left:5px"></div>
<div class="lb " style="left:794px;top:780px">刷卡方式</div>
<div class="in sel" style="left:848px;top:777px;width:201px;height:27px;line-height:25px;padding-left:9px"><span class="cw" style="left:185px;top:9px"><svg class="chev" width="10" height="6" viewBox="0 0 10 6"><polyline points="1,1 5,5 9,1" fill="none" stroke="#4a4a4a" stroke-width="1.9"/></svg></span></div>
<div class="lb " style="left:1065px;top:780px">佣金支付方式</div>
<div class="in sel" style="left:1142px;top:777px;width:212px;height:27px;line-height:25px;padding-left:9px"><span class="cw" style="left:196px;top:9px"><svg class="chev" width="10" height="6" viewBox="0 0 10 6"><polyline points="1,1 5,5 9,1" fill="none" stroke="#4a4a4a" stroke-width="1.9"/></svg></span></div>
</body></html>
